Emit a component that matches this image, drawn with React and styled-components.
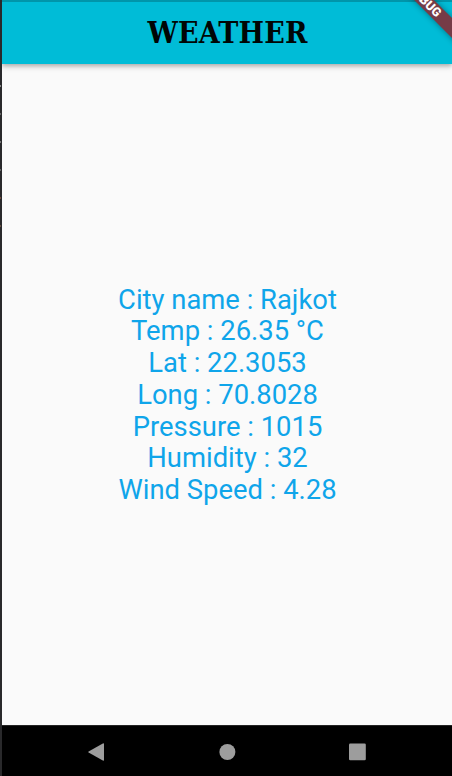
import React from "react";
import styled, { createGlobalStyle } from "styled-components";

const GlobalStyle = createGlobalStyle`
  * { box-sizing: border-box; }
  body { margin: 0; background: #000; }
`;

const Frame = styled.div`
  display: flex;
  width: 452px;
  height: 776px;
  overflow: hidden;
  background: #29292b;
`;

const Edge = styled.div`
  flex: none;
  display: flex;
  flex-direction: column;
  gap: 26px;
  width: 2px;
  padding-top: 85px;
  background: #29292b;
`;

const Tick = styled.div`
  width: 1px;
  height: 2px;
  background: ${({ $color }) => $color};
`;

const Screen = styled.div`
  position: relative;
  flex: 1;
  display: flex;
  flex-direction: column;
  overflow: hidden;
  background: #fafafa;
  font-family: Roboto, sans-serif;
`;

const AppBar = styled.header`
  flex: none;
  display: flex;
  align-items: center;
  justify-content: center;
  height: 64px;
  background: #00bcd7;
  border-top: 2px solid #0095aa;
  box-shadow: 0 2px 4px rgba(0, 0, 0, 0.25), 0 4px 6px rgba(0, 0, 0, 0.08);
`;

const Title = styled.h1`
  margin: 0;
  padding-left: 1px;
  color: #000605;
  font-family: "DejaVu Serif Condensed", "DejaVu Serif", serif;
  font-stretch: condensed;
  font-size: 30px;
  font-weight: 700;
  line-height: 40px;
  letter-spacing: 0.2px;
  white-space: nowrap;
`;

const Readings = styled.main`
  flex: 1;
  display: flex;
  flex-direction: column;
  align-items: center;
  justify-content: center;
  padding: 2.6px 0 0 1px;
`;

const Reading = styled.div`
  color: #0fa5ea;
  font-size: 27.4px;
  line-height: 31.8px;
  white-space: nowrap;
`;

const NavBar = styled.nav`
  flex: none;
  display: flex;
  align-items: center;
  justify-content: space-around;
  height: 51px;
  padding: 2px 29px 0;
  background: #000;
  border-top: 1px solid #242424;
`;

const NavIcon = styled.svg`
  display: block;
  width: 18px;
  height: 18px;
  fill: #9d9d9d;
`;

const DebugBanner = styled.div`
  position: absolute;
  top: 2px;
  right: -36px;
  width: 110px;
  height: 14px;
  padding-right: 23px;
  transform: rotate(45deg);
  background: #763c47;
  box-shadow: 0 0 6px rgba(0, 0, 0, 0.4);
  color: #fff;
  font-size: 12.5px;
  font-weight: 900;
  line-height: 14px;
  text-align: center;
`;

const ticks = ["#888", "#666", "#777", "#666", "#6d4a3a", "#665043"];

const readings = [
  ["City name", "Rajkot"],
  ["Temp", "26.35 °C"],
  ["Lat", "22.3053"],
  ["Long", "70.8028"],
  ["Pressure", "1015"],
  ["Humidity", "32"],
  ["Wind Speed", "4.28"],
];

export default function App() {
  return (
    <>
      <GlobalStyle />
      <Frame>
        <Edge>
          {ticks.map((color, index) => (
            <Tick key={index} $color={color} />
          ))}
        </Edge>
        <Screen>
          <AppBar>
            <Title>WEATHER</Title>
          </AppBar>
          <Readings>
            {readings.map(([label, value]) => (
              <Reading key={label}>{`${label} : ${value}`}</Reading>
            ))}
          </Readings>
          <NavBar>
            <NavIcon viewBox="0 0 18 18" aria-label="Back">
              <path d="M1.6 8.4 15.8.4Q17 0 17 1V17Q17 18 15.8 17.5L1.6 9.6Q.6 9 1.6 8.4Z" />
            </NavIcon>
            <NavIcon viewBox="0 0 18 18" aria-label="Home">
              <circle cx="9.4" cy="9" r="8" />
            </NavIcon>
            <NavIcon viewBox="0 0 18 18" aria-label="Overview">
              <rect x="0" y="0.5" width="16.8" height="16.8" rx="1.3" />
            </NavIcon>
          </NavBar>
          <DebugBanner>DEBUG</DebugBanner>
        </Screen>
      </Frame>
    </>
  );
}
